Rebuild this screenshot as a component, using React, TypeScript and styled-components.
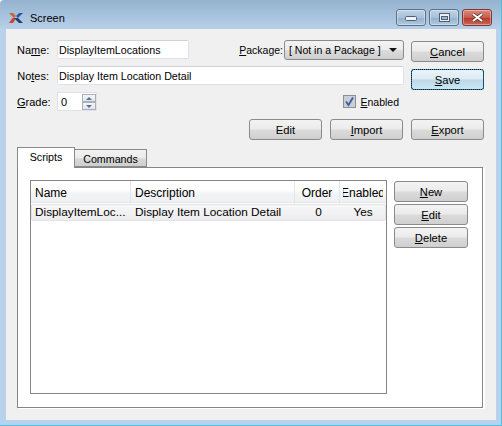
import React from "react";
import styled, { createGlobalStyle } from "styled-components";

const GlobalStyle = createGlobalStyle`
  html, body { margin: 0; padding: 0; background: #fff; }
  #root { width: 502px; height: 426px; overflow: hidden; }
`;

const Frame = styled.div`
  width: 502px;
  height: 426px;
  box-sizing: border-box;
  display: flex;
  flex-direction: column;
  padding: 0 1px 1px 0;
  background: linear-gradient(to bottom, #94b2cf 0, #b9d1ea 30px, #b9d1ea 100%);
  border-right: 1px solid #3fc4ea;
  border-bottom: 1px solid #3fc4ea;
  border-top-left-radius: 4px;
  font-family: "Liberation Sans", Arial, sans-serif;
  font-size: 10.7px;
  color: #000;
`;

const TitleBar = styled.div`
  height: 29px;
  flex: none;
  display: flex;
  align-items: flex-start;
  padding: 0 8px 0 9px;
`;

const Logo = styled.svg`
  width: 14px;
  height: 10px;
  margin-top: 13px;
`;

const Title = styled.div`
  margin: 12px 0 0 7px;
  font-size: 11px;
  flex: 1;
`;

const CaptionButton = styled.div<{ $close?: boolean }>`
  width: 30px;
  height: 17px;
  margin-top: 9px;
  margin-left: 3px;
  box-sizing: border-box;
  border: 1px solid ${(p) => (p.$close ? "#7d3a35" : "#5d7287")};
  border-radius: 3px;
  display: flex;
  align-items: center;
  justify-content: center;
  box-shadow: inset 0 0 0 1px rgba(255, 255, 255, 0.35);
  background: ${(p) =>
    p.$close
      ? "linear-gradient(#dc8a7c 0, #c75b4d 50%, #b9392c 55%, #c9685a 100%)"
      : "linear-gradient(#bdd2e6 0, #a9c1d9 50%, #95b1cd 55%, #afc9e2 100%)"};
`;

const Body = styled.div`
  flex: 1;
  margin: 0 4px 4px 6px;
  background: #f0f0f0;
  padding: 11px 11px 12px 11px;
  display: flex;
  flex-direction: column;
`;

const Top = styled.div`
  display: flex;
  justify-content: space-between;
  height: 107px;
  padding-right: 1px;
`;

const FormColumn = styled.div`
  width: 387px;
  display: flex;
  flex-direction: column;
`;

const ButtonColumn = styled.div`
  width: 73px;
  display: flex;
  flex-direction: column;
  padding: 1px 0 7px;
  gap: 7px;
`;

const ExportSlot = styled.div`
  margin-top: auto;
`;

const FormRow = styled.div<{ $gap?: number }>`
  display: flex;
  align-items: center;
  height: 19px;
  margin-bottom: ${(p) => p.$gap ?? 0}px;
`;

const Label = styled.label`
  width: 32px;
  margin-right: 8px;
  font-size: 11px;
  text-align: right;
  white-space: nowrap;
`;

const TextInput = styled.div<{ $width: number }>`
  width: ${(p) => p.$width}px;
  height: 19px;
  box-sizing: border-box;
  padding: 0 1px;
  line-height: 18px;
  background: #fff;
  border: 1px solid #dfe3e8;
  border-top-color: #cfd3d8;
  border-radius: 2px;
  white-space: nowrap;
`;

const PackageLabel = styled.label`
  margin-left: auto;
  margin-right: 1px;
  font-size: 10.5px;
`;

const Combo = styled.div`
  width: 120px;
  height: 20px;
  box-sizing: border-box;
  align-self: flex-start;
  display: flex;
  align-items: center;
  justify-content: space-between;
  padding: 0 6px 0 4px;
  border: 1px solid #8a8a8a;
  border-radius: 3px;
  font-size: 10.5px;
  white-space: nowrap;
  background: linear-gradient(#f4f4f4 0, #ebebeb 48%, #dcdcdc 52%, #cfcfcf 100%);
`;

const ComboArrow = styled.div`
  width: 0;
  height: 0;
  border-left: 4px solid transparent;
  border-right: 4px solid transparent;
  border-top: 4px solid #111;
`;

const Spin = styled.div`
  width: 40px;
  height: 19px;
  box-sizing: border-box;
  display: flex;
  justify-content: space-between;
  padding: 0 0 0 3px;
  line-height: 18px;
  font-size: 11px;
  background: #fff;
  border: 1px solid #dfe3e8;
`;

const SpinButtons = styled.div`
  width: 14px;
  display: flex;
  flex-direction: column;
  padding-top: 1px;
`;

const SpinButton = styled.div<{ $down?: boolean }>`
  height: 8px;
  box-sizing: border-box;
  border: 1px solid #aab0b8;
  background: linear-gradient(#f4f6f8, #e2e5ea);
  display: flex;
  align-items: center;
  justify-content: center;

  &::after {
    content: "";
    border-left: 3px solid transparent;
    border-right: 3px solid transparent;
    ${(p) => (p.$down ? "border-top" : "border-bottom")}: 3px solid #5a6f9e;
  }
`;

const CheckWrap = styled.div`
  margin-left: auto;
  margin-right: 5px;
  display: flex;
  align-items: center;
  gap: 4px;
  font-size: 10.5px;
`;

const CheckBox = styled.div`
  width: 13px;
  height: 13px;
  box-sizing: border-box;
  border: 1px solid #8e8f8f;
  background: #c9cfd8;
  display: flex;
  align-items: center;
  justify-content: center;
`;

const Button = styled.div<{ $focused?: boolean; $width?: number }>`
  width: ${(p) => p.$width ?? 73}px;
  height: 21px;
  flex: none;
  box-sizing: border-box;
  border: 1px ${(p) => (p.$focused ? "dotted #000" : "solid #8a8a8a")};
  border-radius: 3px;
  text-align: center;
  font-size: 11.2px;
  line-height: 20px;
  background: ${(p) =>
    p.$focused
      ? "linear-gradient(#eaf3f9 0, #dcebf4 48%, #bcd8e9 52%, #cfe5f1 100%) padding-box, #1ea4d6 border-box"
      : "linear-gradient(#f3f3f3 0, #ebebeb 48%, #dbdbdb 52%, #cfcfcf 100%)"};
`;

const ActionRow = styled.div`
  display: flex;
  justify-content: flex-end;
  gap: 8px;
  margin-top: 8px;
  padding-right: 1px;
`;

const Tabs = styled.div`
  flex: 1;
  display: flex;
  flex-direction: column;
  padding-right: 2px;
`;

const TabStrip = styled.div`
  display: flex;
  align-items: flex-end;
  height: 20px;
  flex: none;
  position: relative;
  z-index: 1;
`;

const Tab = styled.div<{ $active?: boolean }>`
  box-sizing: border-box;
  border: 1px solid #8a8a8a;
  text-align: center;
  ${(p) =>
    p.$active
      ? `width: 58px; height: 21px; margin-bottom: -1px; background: #fff; border-bottom: none; line-height: 18px;`
      : `width: 73px; height: 18px; margin-left: -1px; background: linear-gradient(#f2f2f2, #ebebeb 50%, #d8d8d8 55%, #cfcfcf); line-height: 18px;`}
`;

const TabPanel = styled.div`
  flex: 1;
  box-sizing: border-box;
  border: 1px solid #858585;
  background: #fff;
  padding: 12px 14px 13px 12px;
  display: flex;
  gap: 7px;
  box-shadow: 2px 1px 0 #fff;
`;

const Table = styled.div`
  width: 357px;
  flex: none;
  box-sizing: border-box;
  border: 1px solid #858585;
`;

const columns = "100px 164px 45px 1fr";

const HeaderRow = styled.div`
  display: grid;
  grid-template-columns: ${columns};
  height: 22px;
  box-sizing: border-box;
  font-size: 12px;
  background: linear-gradient(#fff 0, #fff 40%, #f3f4f5 60%, #eef0f2 100%);
  border-bottom: 1px solid #e3e5e8;
`;

const HeaderCell = styled.div`
  box-sizing: border-box;
  padding-left: 4px;
  line-height: 24px;
  border-right: 1px solid #e3e5e8;
`;

const ClippedHeader = styled.div`
  display: flex;
  justify-content: center;
  margin: 0 3px;
  overflow: hidden;
  line-height: 24px;
  white-space: nowrap;
`;

const OrderHeader = styled(HeaderCell)`
  padding-left: 0;
  text-align: center;
`;

const DataRow = styled.div`
  display: grid;
  grid-template-columns: ${columns};
  height: 17px;
  margin-top: 1px;
  border: 1px solid #e1e3e6;
  border-radius: 2px;
  box-sizing: border-box;
  font-size: 11.8px;
  background: linear-gradient(#f7f7f8, #ececee);
`;

const DataCell = styled.div<{ $center?: boolean }>`
  line-height: 15px;
  white-space: nowrap;
  overflow: hidden;
  padding-left: ${(p) => (p.$center ? 0 : 3)}px;
  ${(p) => p.$center && "text-align: center;"}
`;

const SideButtons = styled.div`
  width: 74px;
  flex: none;
  display: flex;
  flex-direction: column;
  gap: 2px;
  padding-top: 1px;
`;

export default function App() {
  return (
    <Frame>
      <GlobalStyle />
      <TitleBar>
        <Logo viewBox="0 0 14 10">
          <path d="M0 0 L4 0 L7 3 L5 5 Z" fill="#c9662f" />
          <path d="M14 0 L10 0 L7 3 L9 5 Z" fill="#2b5a9b" />
          <path d="M0 10 L3.5 5 L7 5 L4 10 Z" fill="#d8402a" />
          <path d="M14 10 L10 10 L7 7 L5 5 L9 5 Z" fill="#1f3f77" />
        </Logo>
        <Title>Screen</Title>
        <CaptionButton>
          <svg width="12" height="6" viewBox="0 0 12 6">
            <rect x="0.5" y="1.5" width="11" height="4" rx="1" fill="#eef3f8" stroke="#4d5f73" />
          </svg>
        </CaptionButton>
        <CaptionButton>
          <svg width="11" height="9" viewBox="0 0 11 9">
            <rect x="0.5" y="0.5" width="10" height="8" fill="#e9eff5" stroke="#4d5f73" />
            <rect x="2.5" y="3.5" width="6" height="3" fill="#9db7d0" stroke="#4d5f73" />
          </svg>
        </CaptionButton>
        <CaptionButton $close>
          <svg width="13" height="9" viewBox="0 0 13 9">
            <path d="M2 1 L11 8 M11 1 L2 8" stroke="#4c2420" strokeWidth="3.4" />
            <path d="M2 1 L11 8 M11 1 L2 8" stroke="#fff" strokeWidth="2.2" />
          </svg>
        </CaptionButton>
      </TitleBar>
      <Body>
        <Top>
          <FormColumn>
            <FormRow $gap={7}>
              <Label>Na<u>m</u>e:</Label>
              <TextInput $width={132}>DisplayItemLocations</TextInput>
              <PackageLabel><u>P</u>ackage:</PackageLabel>
              <Combo>
                <span>[ Not in a Package ]</span>
                <ComboArrow />
              </Combo>
            </FormRow>
            <FormRow $gap={7}>
              <Label>No<u>t</u>es:</Label>
              <TextInput $width={347}>Display Item Location Detail</TextInput>
            </FormRow>
            <FormRow>
              <Label><u>G</u>rade:</Label>
              <Spin>
                <span>0</span>
                <SpinButtons>
                  <SpinButton />
                  <SpinButton $down />
                </SpinButtons>
              </Spin>
              <CheckWrap>
                <CheckBox>
                  <svg width="11" height="11" viewBox="0 0 11 11">
                    <path d="M2 5.5 L4.5 9 L9 1.5" fill="none" stroke="#3f5f9f" strokeWidth="1.8" />
                  </svg>
                </CheckBox>
                <span><u>E</u>nabled</span>
              </CheckWrap>
            </FormRow>
            <ActionRow>
              <Button>Edit</Button>
              <Button><u>I</u>mport</Button>
            </ActionRow>
          </FormColumn>
          <ButtonColumn>
            <Button><u>C</u>ancel</Button>
            <Button $focused><u>S</u>ave</Button>
            <ExportSlot>
              <Button><u>E</u>xport</Button>
            </ExportSlot>
          </ButtonColumn>
        </Top>
        <Tabs>
          <TabStrip>
            <Tab $active>Scripts</Tab>
            <Tab>Commands</Tab>
          </TabStrip>
          <TabPanel>
            <Table>
              <HeaderRow>
                <HeaderCell>Name</HeaderCell>
                <HeaderCell>Description</HeaderCell>
                <OrderHeader>Order</OrderHeader>
                <ClippedHeader>Enabled</ClippedHeader>
              </HeaderRow>
              <DataRow>
                <DataCell>DisplayItemLoc...</DataCell>
                <DataCell>Display Item Location Detail</DataCell>
                <DataCell $center>0</DataCell>
                <DataCell $center>Yes</DataCell>
              </DataRow>
            </Table>
            <SideButtons>
              <Button $width={74}><u>N</u>ew</Button>
              <Button $width={74}><u>E</u>dit</Button>
              <Button $width={74}><u>D</u>elete</Button>
            </SideButtons>
          </TabPanel>
        </Tabs>
      </Body>
    </Frame>
  );
}
